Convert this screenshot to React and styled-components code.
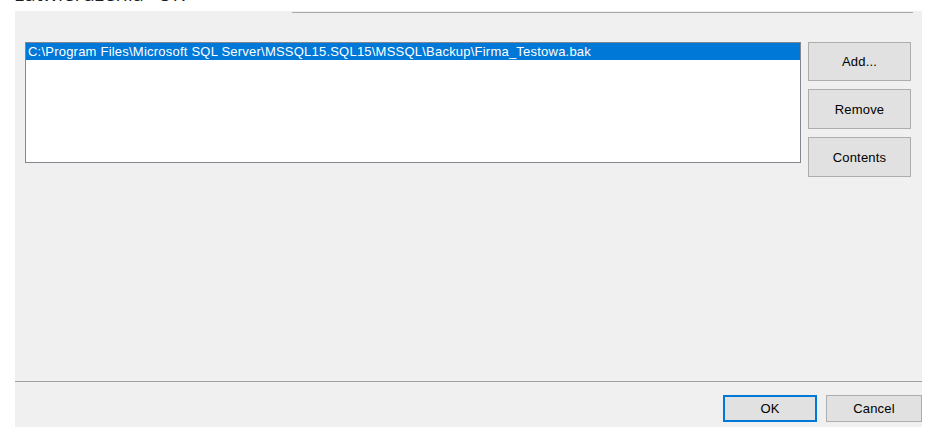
import React from 'react';
import styled, { createGlobalStyle } from 'styled-components';

const GlobalStyle = createGlobalStyle`
	html, body {
		margin: 0;
		padding: 0;
		background: #ffffff;
	}
	body {
		font-family: 'Liberation Sans', Arial, sans-serif;
		overflow: hidden;
	}
`;

const PageWrapper = styled.div`
	width: 936px;
	height: 435px;
	padding-left: 15px;
	box-sizing: border-box;
	overflow: hidden;
`;

// the heading above the dialog only shows its lower edge
const Caption = styled.div`
	display: flow-root;
	height: 11px;
	overflow: visible;
`;

const CaptionText = styled.p`
	margin: -19px 0 0 0;
	font-family: 'Open Sans', 'Noto Sans', sans-serif;
	font-size: 20px;
	line-height: 26px;
	color: #1e1e1e;
	white-space: nowrap;
`;

const Dialog = styled.div`
	width: 907px;
	height: 416px;
	background: #f0f0f0;
	display: flex;
	flex-direction: column;
`;

const TopRule = styled.div`
	margin: 1px 0 0 277px;
	width: 621px;
	border-top: 1px solid #a9a9a9;
`;

const MediaRow = styled.div`
	display: flex;
	align-items: flex-start;
	gap: 7px;
	padding: 29px 0 0 10px;
	flex: 1;
`;

const ListBox = styled.div`
	width: 776px;
	height: 121px;
	box-sizing: border-box;
	border: 1px solid #828790;
	background: #ffffff;
	padding: 0;
`;

const ListItem = styled.div`
	height: 17px;
	line-height: 17px;
	padding-left: 2px;
	font-size: 13px;
	letter-spacing: 0.22px;
	color: ${p => (p.$selected ? '#ffffff' : '#000000')};
	background: ${p => (p.$selected ? '#0078d7' : 'transparent')};
	white-space: nowrap;
`;

const ButtonColumn = styled.div`
	display: flex;
	flex-direction: column;
	gap: 8px;
`;

const DialogButton = styled.button`
	box-sizing: border-box;
	width: ${p => p.$width || 103}px;
	height: ${p => p.$height || 39}px;
	margin: 0;
	padding: 0;
	background: #e1e1e1;
	border: ${p => (p.$default ? '2px solid #0078d7' : '1px solid #adadad')};
	font-family: 'Liberation Sans', Arial, sans-serif;
	font-size: 13px;
	letter-spacing: 0.2px;
	color: #000000;
	cursor: default;
`;

const Footer = styled.div`
	border-top: 1px solid #a0a0a0;
	display: flex;
	justify-content: flex-end;
	gap: 9px;
	padding: 13px 0 5px 0;
`;

const files = [
	'C:\\Program Files\\Microsoft SQL Server\\MSSQL15.SQL15\\MSSQL\\Backup\\Firma_Testowa.bak',
];

const App = () => {
	return (
		<>
			<GlobalStyle />
			<PageWrapper>
				<Caption>
					<CaptionText>zatwierdzenia "OK"</CaptionText>
				</Caption>
				<Dialog>
					<TopRule />
					<MediaRow>
						<ListBox>
							{files.map((f, i) => (
								<ListItem key={f} $selected={i === 0}>
									{f}
								</ListItem>
							))}
						</ListBox>
						<ButtonColumn>
							<DialogButton>Add...</DialogButton>
							<DialogButton $height={40}>Remove</DialogButton>
							<DialogButton $height={40}>Contents</DialogButton>
						</ButtonColumn>
					</MediaRow>
					<Footer>
						<DialogButton $default $width={94} $height={27}>
							OK
						</DialogButton>
						<DialogButton $width={96} $height={27}>
							Cancel
						</DialogButton>
					</Footer>
				</Dialog>
			</PageWrapper>
		</>
	);
};

export default App;
